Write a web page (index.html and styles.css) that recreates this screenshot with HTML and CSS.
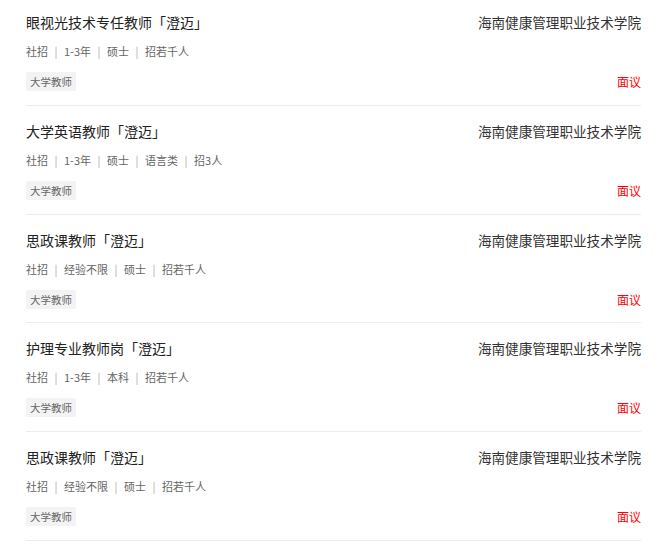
FILE: index.html
```html
<!DOCTYPE html>
<html lang="zh-CN">
<head>
    <meta charset="UTF-8">
    <title>职位列表</title>
    <link rel="stylesheet" href="styles.css">
</head>
<body>
    <ul class="job-list">
        <li class="job-item">
            <div class="job-main">
                <h3 class="job-title">眼视光技术专任教师「澄迈」</h3>
                <p class="job-meta">社招<span class="sep">|</span>1-3年<span class="sep">|</span>硕士<span class="sep">|</span>招若千人</p>
                <span class="job-tag">大学教师</span>
            </div>
            <div class="job-side">
                <span class="company">海南健康管理职业技术学院</span>
                <span class="salary">面议</span>
            </div>
        </li>
        <li class="job-item">
            <div class="job-main">
                <h3 class="job-title">大学英语教师「澄迈」</h3>
                <p class="job-meta">社招<span class="sep">|</span>1-3年<span class="sep">|</span>硕士<span class="sep">|</span>语言类<span class="sep">|</span>招3人</p>
                <span class="job-tag">大学教师</span>
            </div>
            <div class="job-side">
                <span class="company">海南健康管理职业技术学院</span>
                <span class="salary">面议</span>
            </div>
        </li>
        <li class="job-item">
            <div class="job-main">
                <h3 class="job-title">思政课教师「澄迈」</h3>
                <p class="job-meta">社招<span class="sep">|</span>经验不限<span class="sep">|</span>硕士<span class="sep">|</span>招若千人</p>
                <span class="job-tag">大学教师</span>
            </div>
            <div class="job-side">
                <span class="company">海南健康管理职业技术学院</span>
                <span class="salary">面议</span>
            </div>
        </li>
        <li class="job-item">
            <div class="job-main">
                <h3 class="job-title">护理专业教师岗「澄迈」</h3>
                <p class="job-meta">社招<span class="sep">|</span>1-3年<span class="sep">|</span>本科<span class="sep">|</span>招若千人</p>
                <span class="job-tag">大学教师</span>
            </div>
            <div class="job-side">
                <span class="company">海南健康管理职业技术学院</span>
                <span class="salary">面议</span>
            </div>
        </li>
        <li class="job-item">
            <div class="job-main">
                <h3 class="job-title">思政课教师「澄迈」</h3>
                <p class="job-meta">社招<span class="sep">|</span>经验不限<span class="sep">|</span>硕士<span class="sep">|</span>招若千人</p>
                <span class="job-tag">大学教师</span>
            </div>
            <div class="job-side">
                <span class="company">海南健康管理职业技术学院</span>
                <span class="salary">面议</span>
            </div>
        </li>
    </ul>
</body>
</html>
```

FILE: styles.css
```css
* {
    margin: 0;
    padding: 0;
    box-sizing: border-box;
}

body {
    background: #fff;
    color: #333;
    font-family: "Noto Sans CJK SC", "Liberation Sans", sans-serif;
}

.job-list {
    list-style: none;
    margin: -3px 22px 0 26px;
}

.job-item {
    display: flex;
    justify-content: space-between;
    padding: 15px 0 13.75px;
    border-bottom: 1px solid #ececec;
}

.job-main {
    display: flex;
    flex-direction: column;
    align-items: flex-start;
}

.job-title {
    font-size: 14px;
    font-weight: normal;
    line-height: 20px;
    color: #222;
}

.job-meta {
    margin-top: 10px;
    font-size: 11px;
    line-height: 18px;
    color: #666;
}

.sep {
    display: inline-block;
    width: 16px;
    text-align: center;
    color: #aaa;
}

.job-tag {
    margin-top: 12px;
    padding: 0 4px;
    height: 19px;
    line-height: 19px;
    font-size: 10.5px;
    color: #666;
    background: #f3f3f3;
    border-radius: 2px;
}

.job-side {
    display: flex;
    flex-direction: column;
    justify-content: space-between;
    align-items: flex-end;
}

.company {
    font-size: 13.6px;
    line-height: 20px;
    color: #333;
}

.salary {
    font-size: 12px;
    line-height: 19px;
    color: #f00;
}
```
